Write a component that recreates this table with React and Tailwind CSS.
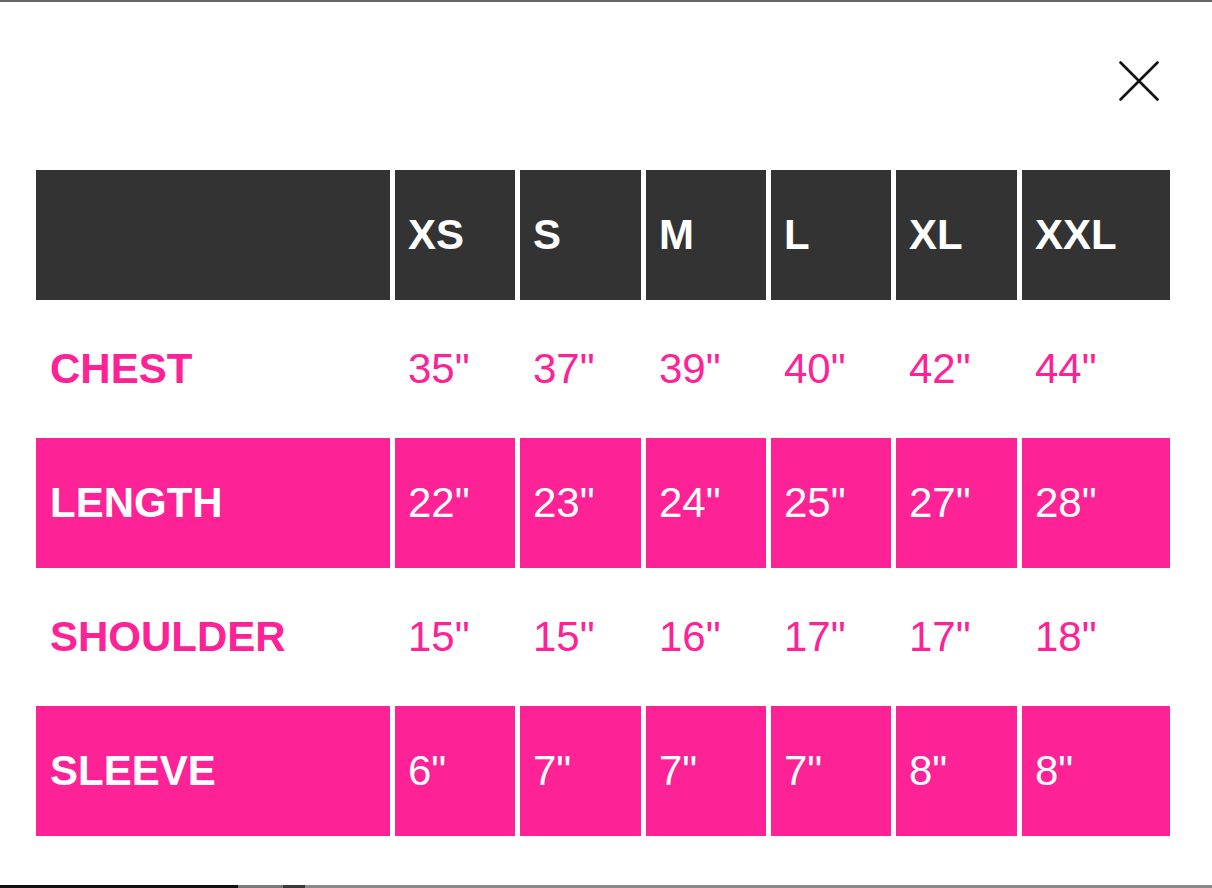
import React from 'react';

const sizes = ['XS', 'S', 'M', 'L', 'XL', 'XXL'];

const rows = [
    { label: 'CHEST', values: ['35"', '37"', '39"', '40"', '42"', '44"'], filled: false },
    { label: 'LENGTH', values: ['22"', '23"', '24"', '25"', '27"', '28"'], filled: true },
    { label: 'SHOULDER', values: ['15"', '15"', '16"', '17"', '17"', '18"'], filled: false },
    { label: 'SLEEVE', values: ['6"', '7"', '7"', '7"', '8"', '8"'], filled: true },
];

const CloseIcon = () => (
    <svg width="40" height="40" viewBox="0 0 40 40" fill="none">
        <path d="M1.5 1.5 L38.5 38.5 M38.5 1.5 L1.5 38.5" stroke="#111" strokeWidth="2.6" strokeLinecap="round" />
    </svg>
);

const App = () => {
    return (
        <div className="w-[1212px] h-[888px] flex flex-col bg-white overflow-hidden" style={{ fontFamily: '"Liberation Sans", Arial, sans-serif' }}>
            <div className="h-[2px] bg-[#666666] shrink-0" />

            <div className="flex-1 flex flex-col">
                <div className="flex justify-end pr-[53px] pt-[59px]">
                    <button className="w-10 h-10 flex items-center justify-center" aria-label="Cerrar">
                        <CloseIcon />
                    </button>
                </div>

                <div className="mt-[69px] ml-[36px] grid grid-cols-[354px_120px_121px_120px_120px_121px_148px] auto-rows-[130px] gap-x-[5px] gap-y-[4px] text-[42px] leading-none">
                    <div className="bg-[#333333]" />
                    {sizes.map(size => (
                        <div key={size} className="bg-[#333333] text-white font-bold flex items-center pl-[13px]">
                            {size}
                        </div>
                    ))}

                    {rows.map(row => (
                        <React.Fragment key={row.label}>
                            <div className={`flex items-center pl-[14px] font-bold ${row.filled ? 'bg-[#fd2295] text-white' : 'text-[#fd2295]'}`}>
                                {row.label}
                            </div>
                            {row.values.map((value, i) => (
                                <div key={i} className={`flex items-center pl-[13px] ${row.filled ? 'bg-[#fd2295] text-white' : 'text-[#fd2295]'}`}>
                                    {value}
                                </div>
                            ))}
                        </React.Fragment>
                    ))}
                </div>
            </div>

            <div className="h-[3px] shrink-0 flex">
                <div className="w-[238px] bg-[#111111]" />
                <div className="w-[45px] bg-[#7a7a7a]" />
                <div className="w-[22px] bg-[#3a3a3a]" />
                <div className="flex-1 bg-[#8a8a8a]" />
            </div>
        </div>
    );
};

export default App;
